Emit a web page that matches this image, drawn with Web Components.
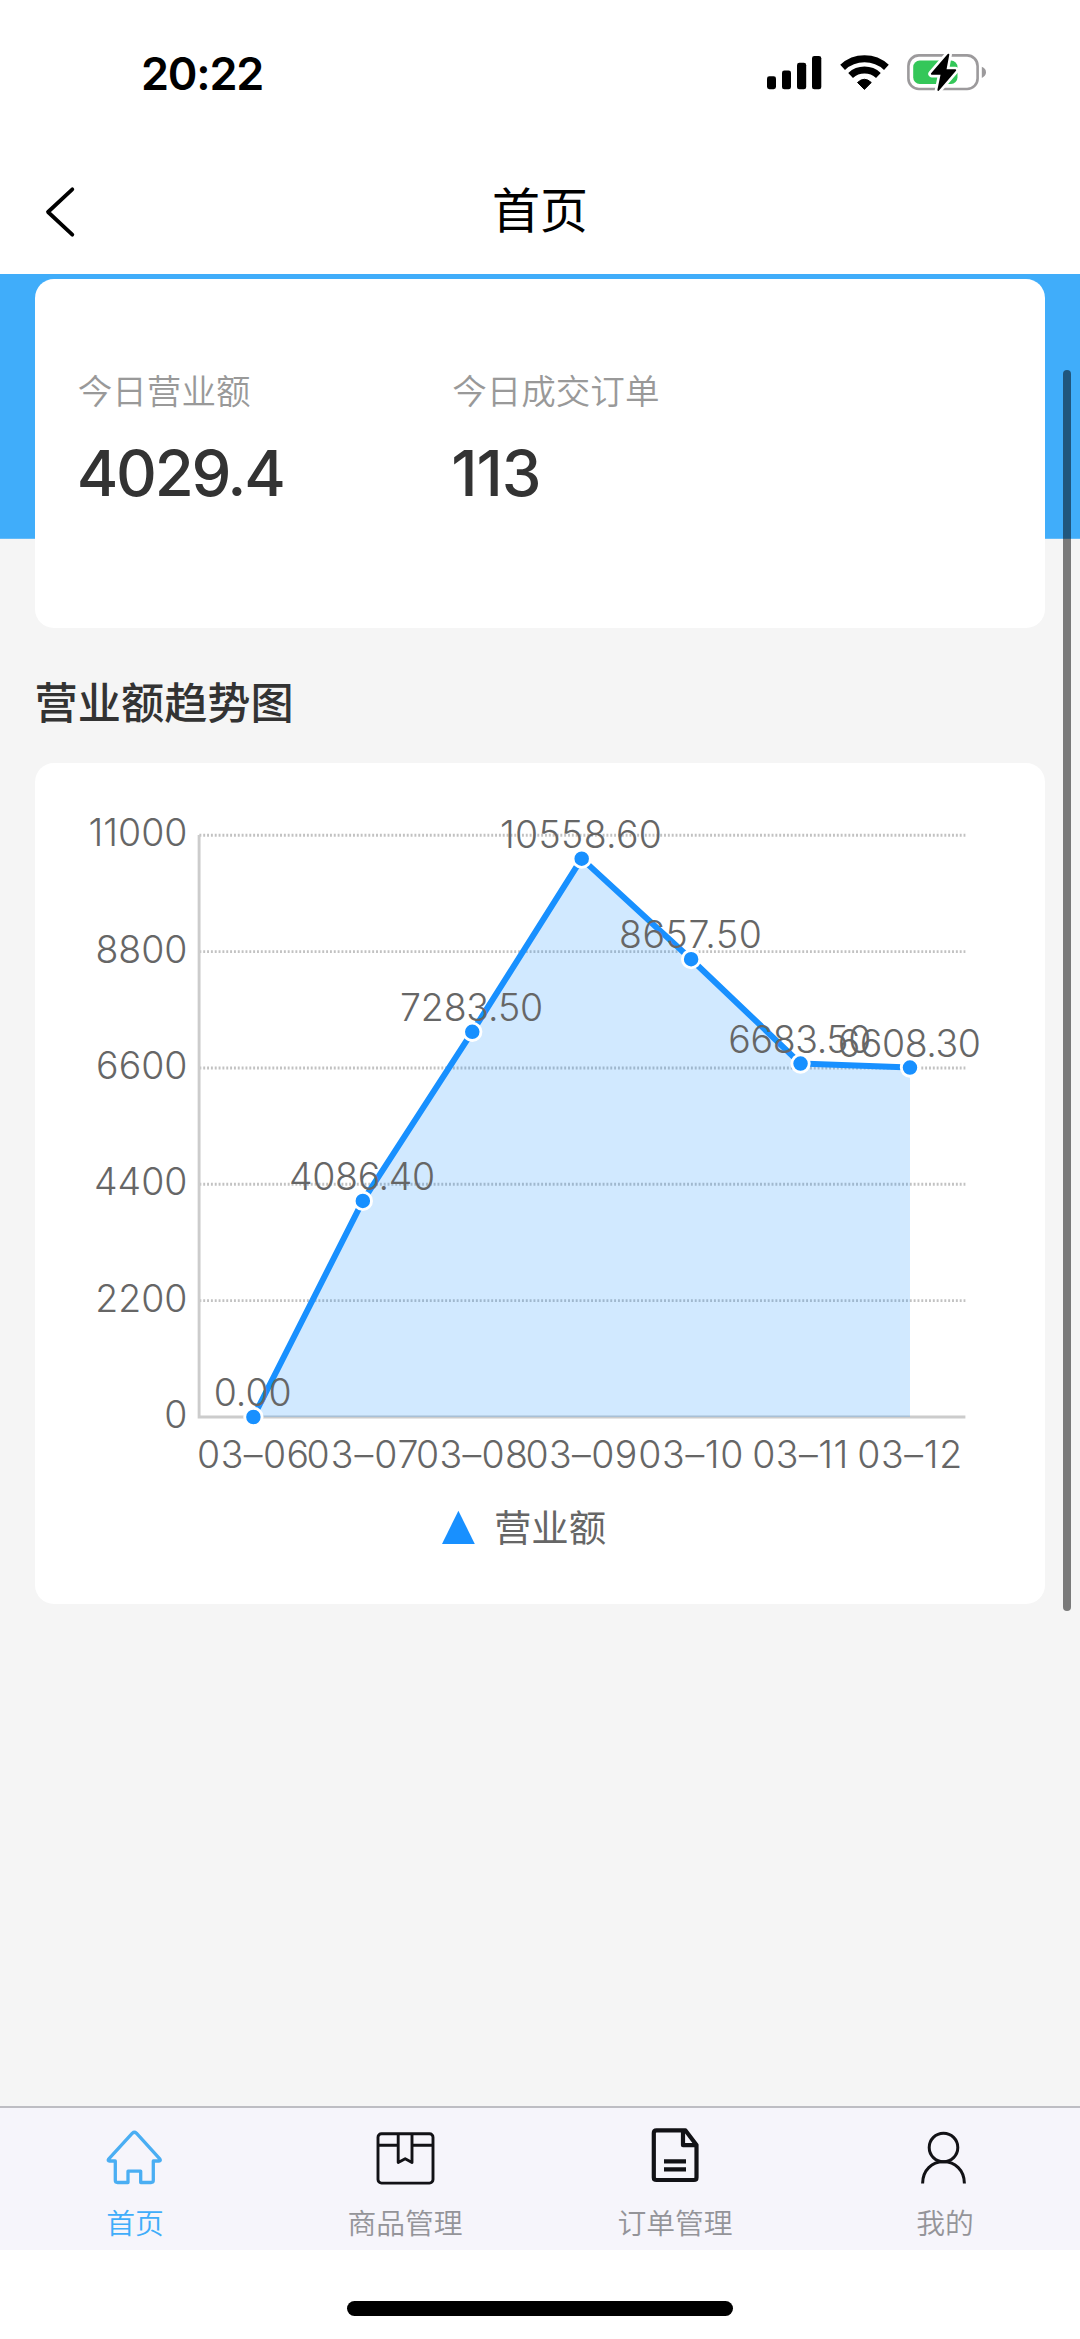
<!DOCTYPE html>
<html lang="zh-CN">
<head>
<meta charset="utf-8">
<title>首页</title>
<style>
html,body{margin:0;padding:0;background:#fff}
body{font-family:Inter,"Noto Sans CJK SC",sans-serif;width:1080px;height:2339px;overflow:hidden}
</style>
</head>
<body>
<app-screen>
  <status-bar slot="top" time="20:22"></status-bar>
  <nav-header slot="top">首页</nav-header>
  <stats-card>
    <stat-item label="今日营业额" style="--tracking:-2.300px">4029.4</stat-item>
    <stat-item label="今日成交订单" style="--tracking:-1px">113</stat-item>
  </stats-card>
  <section-title>营业额趋势图</section-title>
  <trend-chart name="营业额"></trend-chart>
  <tab-bar slot="bottom">
    <tab-item icon="home" active>首页</tab-item>
    <tab-item icon="box">商品管理</tab-item>
    <tab-item icon="doc">订单管理</tab-item>
    <tab-item icon="user">我的</tab-item>
  </tab-bar>
  <home-indicator slot="bottom"></home-indicator>
</app-screen>
<script>
const define = (name, render) => customElements.define(name, class extends HTMLElement {
  connectedCallback() {
    if (this.shadowRoot) return;
    this.attachShadow({ mode: 'open' }).innerHTML = render(this);
  }
});

define('app-screen', () => `
<style>
:host{display:flex;flex-direction:column;width:1080px;height:2339px;background:#fff}
main{position:relative;flex:1;display:flex;flex-direction:column;padding:5.6px 34.6px 0;
  background:linear-gradient(#40adfa,#40adfa) 0 0/100% 264.8px no-repeat #f5f5f5}
.thumb{position:absolute;right:8.7px;top:96px;width:8.6px;height:1241px;border-radius:5px;background:rgba(0,0,0,.5)}
</style>
<slot name="top"></slot>
<main><slot></slot><div class="thumb"></div></main>
<slot name="bottom"></slot>`);

define('status-bar', el => `
<style>
:host{display:flex;justify-content:space-between;align-items:center;height:147px;box-sizing:border-box;padding:0 92px 0 141px;color:#000}
time{font-size:45px;font-weight:600;line-height:50px;letter-spacing:-1.200px}
svg{display:block;width:222px;height:40px;margin-bottom:3px}
</style>
<time>${el.getAttribute('time')}</time>
<svg viewBox="766 52 222 40">
  <rect x="767" y="76.2" width="9" height="13" rx="2.4"/><rect x="782" y="70.4" width="9" height="18.9" rx="2.4"/>
  <rect x="797" y="62.8" width="9.2" height="26.5" rx="2.4"/><rect x="812" y="55.9" width="9.3" height="33.4" rx="2.4"/>
  <g fill="none" stroke="#000" stroke-width="7">
    <path d="M842.6 67.4A32.3 32.3 0 0 1 886.4 67.4"/><path d="M850.6 75.5A20.6 20.6 0 0 1 878.4 75.5"/>
  </g>
  <path d="M864.4 89.4L857.5 82.5Q864.4 76 871.3 82.5Z" stroke="#000" stroke-width="1" stroke-linejoin="round"/>
  <rect x="908.4" y="55.4" width="69.2" height="33.6" rx="10.5" fill="none" stroke="#9c9a9c" stroke-width="2.6"/>
  <path d="M981.8 66.7Q986 68.4 986 72.3Q986 76.2 981.8 77.9Z" fill="#9c9a9c"/>
  <rect x="913.2" y="60.6" width="44.3" height="23.4" rx="6.5" fill="#34c759"/>
  <path d="M948.4 54.6L931.8 73.9H941.6L938.3 90L955.3 70.2H945.5Z" fill="#fff" stroke="#fff" stroke-width="7" stroke-linejoin="round"/>
  <path d="M948.4 54.6L931.8 73.9H941.6L938.3 90L955.3 70.2H945.5Z" stroke="#000" stroke-width="1.8" stroke-linejoin="round"/>
</svg>`);

define('nav-header', () => `
<style>
:host{display:grid;grid-template-columns:1fr auto 1fr;align-items:center;height:126.7px;box-sizing:border-box;padding:0 44px;color:#000}
svg{display:block;width:32px;height:52px;margin-top:4px}
h1{margin:0 0 6px;font-size:48px;font-weight:400;line-height:60px;font-family:"Noto Sans CJK SC",sans-serif}
</style>
<svg viewBox="44 186 32 52" fill="none" stroke="#000" stroke-width="3.8" stroke-linecap="round" stroke-linejoin="round"><path d="M72.3 189.3L48 212L72.3 234.7"/></svg>
<h1><slot></slot></h1><span></span>`);

define('stats-card', () => `
<style>
:host{display:flex;background:#fff;border-radius:19px;height:348.7px;box-sizing:border-box;padding:84.5px 43.2px 0}
</style><slot></slot>`);

define('stat-item', el => `
<style>
:host{display:flex;flex-direction:column;width:374.4px}
.label{font-size:34.56px;line-height:50px;color:#999;font-family:"Noto Sans CJK SC",sans-serif;font-weight:350}
.value{font-size:63.36px;line-height:76px;margin:21.5px 0 0 -1px;color:#333;font-weight:500;letter-spacing:var(--tracking)}
</style>
<span class="label">${el.getAttribute('label')}</span><span class="value"><slot></slot></span>`);

define('section-title', () => `
<style>
:host{display:block;height:135px;line-height:144px;font-size:43.2px;font-weight:500;color:#333;font-family:"Noto Sans CJK SC",sans-serif}
</style><slot></slot>`);

define('trend-chart', el => {
  const data = [['03–06', 0], ['03–07', 4086.4], ['03–08', 7283.5], ['03–09', 10558.6], ['03–10', 8657.5], ['03–11', 6683.5], ['03–12', 6608.3]];
  const widths = { '0.00': 78, '4086.40': 146, '10558.60': 162 };
  const X = i => 253 + i * 109.43, Y = v => 1417 - v * 581.7 / 11000;
  const pts = data.map(([, v], i) => `${X(i)},${Y(v)}`);
  const grid = [0, 2200, 4400, 6600, 8800, 11000].map(v =>
    (v ? `<path d="M199 ${Y(v)}H965" stroke="#c2c2c2" stroke-width="2.9" stroke-dasharray="1.92 1.92"/>` : '') +
    `<text x="187" y="${Y(v) + 11}" text-anchor="end">${v}</text>`).join('');
  return `
<style>
:host{display:block;background:#fff;border-radius:19px;height:841px}
svg{display:block;width:1010.8px;height:841px}
text{font-family:Inter,"Noto Sans CJK SC",sans-serif;font-size:37.44px;font-weight:350;fill:#666;font-feature-settings:"calt" 0}
.legend{font-family:"Noto Sans CJK SC",sans-serif;font-weight:400}
</style>
<svg viewBox="34.6 763 1010.8 841">
  ${grid}
  <path d="M198.7 835V1417H965" fill="none" stroke="#ccc" stroke-width="2.9"/>
  <polygon points="${X(0)},1417 ${pts.join(' ')} ${X(6)},1417" fill="#1890ff" fill-opacity=".2"/>
  <polyline points="${pts.join(' ')}" fill="none" stroke="#1890ff" stroke-width="6" stroke-linejoin="round"/>
  ${data.map(([, v], i) => `<circle cx="${X(i)}" cy="${Y(v)}" r="8.7" fill="#1890ff" stroke="#fff" stroke-width="2.9"/>`).join('')}
  ${data.map(([d, v], i) => {
    const t = v.toFixed(2);
    return `<text x="${X(i) - .7}" y="${Y(v) - 10.8}" text-anchor="middle" textLength="${widths[t] || 143}">${t}</text>
    <text x="${X(i) - .3}" y="1468.3" text-anchor="middle" textLength="${{ '03–10': 105, '03–11': 96, '03–12': 105 }[d] || 112}">${d}</text>`;
  }).join('')}
  <path d="M458 1510.7L474.4 1544H441.6Z" fill="#1890ff"/>
  <text class="legend" x="493.5" y="1542.5">${el.getAttribute('name')}</text>
</svg>`;
});

define('tab-bar', () => `
<style>
:host{display:flex;height:144.3px;box-sizing:border-box;border-top:2px solid #bdbdc3;background:#f6f5fb}
</style><slot></slot>`);

const icons = {
  home: '<g stroke="#4aaef3" stroke-width="3.3"><path d="M132.400 2134.200Q134.400 2132.300 136.400 2134.200L160 2160.200Q161 2162 159 2162H153.300V2181.300Q153.300 2183.500 151 2183.500H140.700V2172.200H128V2183.500H117.500Q115.300 2183.500 115.300 2181.300V2162H109.500Q107.500 2162 108.600 2160.200Z"/></g>',
  box: '<g transform="translate(-270)" stroke="#121216" stroke-width="2.9"><rect x="378" y="2134.700" width="55" height="49.400" rx="3.500"/><path d="M378 2146.200H398.200M412 2146.200H433M398.200 2135V2163.600L405.200 2159.800L412 2163.600V2135"/></g>',
  doc: '<g transform="translate(-540)" stroke="#121216" stroke-width="4.2"><path d="M656.500 2131.400H685.500L696.500 2146V2178.500Q696.500 2181 694 2181H656.500Q653.800 2181 653.800 2178.500V2134Q653.800 2131.400 656.500 2131.400ZM683 2132V2146.200H696M664 2162.300H686M664 2170.300H686"/></g>',
  user: '<g transform="translate(-810)" stroke="#121216" stroke-width="3"><circle cx="943.500" cy="2148.500" r="14.300"/><path d="M922.600 2184.500C922.600 2171 932 2162.800 943.500 2162.800S964.400 2171 964.400 2184.500"/></g>'
};
define('tab-item', el => `
<style>
:host{flex:1;display:flex;flex-direction:column;align-items:center;padding-top:19px}
svg{display:block;width:64px;height:60px}
span{font-size:28.8px;line-height:36px;margin-top:17.5px;font-family:"Noto Sans CJK SC",sans-serif;font-weight:350;color:${el.hasAttribute('active') ? '#40adfa' : '#949499'}}
</style>
<svg viewBox="103 2128 64 60" fill="none" stroke-linejoin="round">${icons[el.getAttribute('icon')]}</svg>
<span><slot></slot></span>`);

define('home-indicator', () => `
<style>
:host{display:flex;justify-content:center;height:89px;box-sizing:border-box;padding-top:51px;background:#fff}
i{width:386px;height:15px;border-radius:8px;background:#000}
</style><i></i>`);
</script>
</body>
</html>
